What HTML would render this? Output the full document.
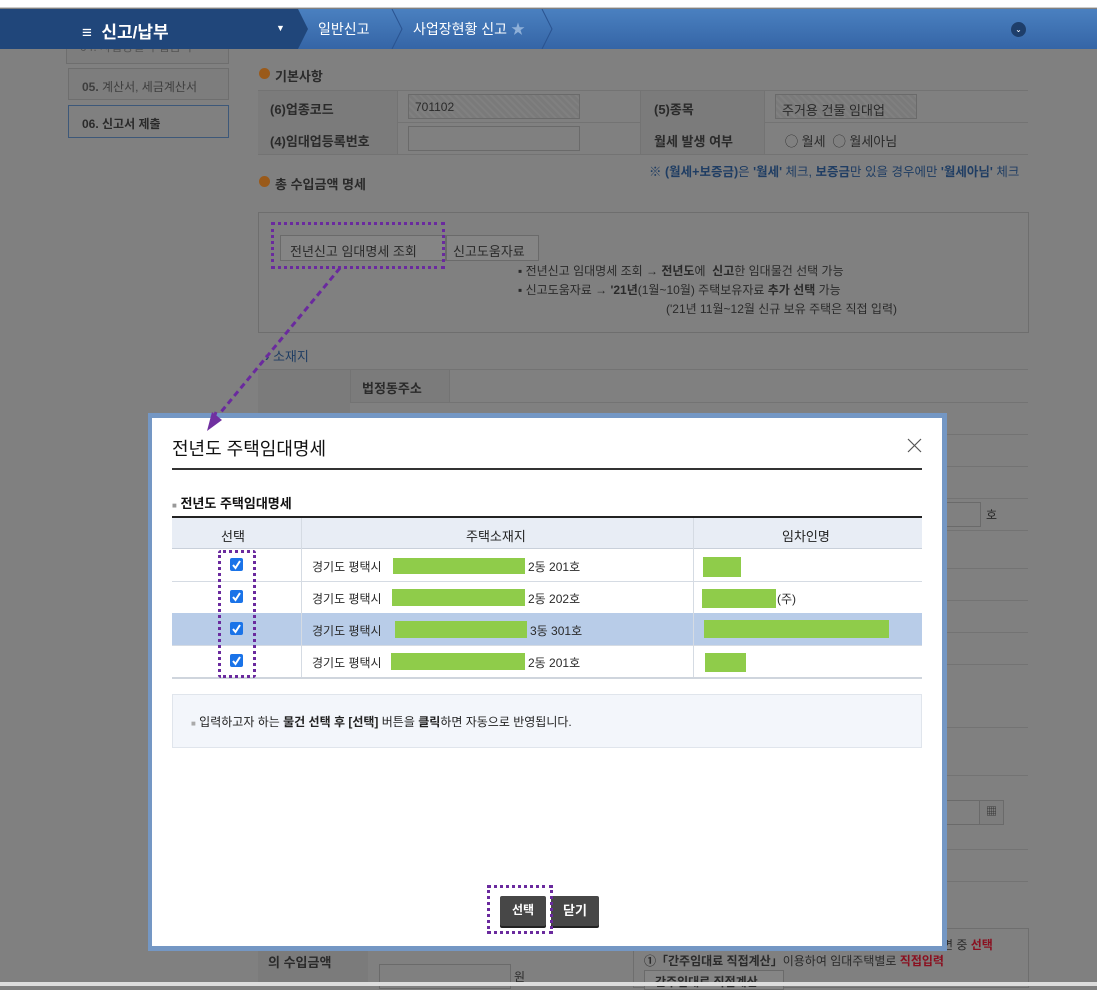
<!DOCTYPE html>
<html><head><meta charset="utf-8"><style>
*{margin:0;padding:0;box-sizing:border-box}
body{width:1097px;height:986px;overflow:hidden;background:#808080;position:relative;font-family:"Liberation Sans","Noto Sans CJK KR",sans-serif;font-size:12px;color:#2a2a2a}
.a{position:absolute}
.b{font-weight:bold}
.ln{position:absolute;height:1px;background:#737373}
</style></head><body>
<div class="a" style="left:0;top:0;width:1097px;height:8px;background:#fff;border-bottom:1px solid #ccc"></div>
<div class="a" style="left:66px;top:40px;width:163px;height:24px;border:1px solid #6e6e6e;background:#7d7d7d;padding:0 13px;color:#555;font-size:12px;line-height:12px">04. 사업장별 수입금액</div>
<div class="a" style="left:0;top:9px;width:1097px;height:40px;background:linear-gradient(#4a80c0,#3565a6)"></div>
<div class="a" style="left:0;top:9px;width:297px;height:40px;background:#20467a"></div>
<div class="a b" style="left:82px;top:18px;color:#fff;font-size:17px">≡&nbsp; 신고/납부</div>
<div class="a" style="left:276px;top:23px;color:#fff;font-size:9px">▼</div>
<svg class="a" style="left:290px;top:9px" width="20" height="40"><path d="M0 0H8L18 20L8 40H0Z" fill="#20467a"/></svg>
<div class="a" style="left:318px;top:19px;color:#fff;font-size:14px">일반신고</div>
<svg class="a" style="left:390px;top:9px" width="14" height="40"><path d="M2 0L12 20L2 40" fill="none" stroke="#2a5390" stroke-width="1"/></svg>
<div class="a" style="left:413px;top:19px;color:#fff;font-size:14px">사업장현황 신고 <span style="color:#8fb0d8">★</span></div>
<svg class="a" style="left:540px;top:9px" width="14" height="40"><path d="M2 0L12 20L2 40" fill="none" stroke="#2a5390" stroke-width="1"/></svg>
<div class="a" style="left:1011px;top:22px;width:15px;height:15px;border-radius:50%;background:#1e3e6a;color:#fff;font-size:8px;text-align:center;line-height:15px">⌄</div>

<div class="a" style="left:68px;top:68px;width:161px;height:32px;border:1px solid #6e6e6e;background:#7d7d7d;padding:9px 13px;color:#3e3e3e"><span class="b">05.</span> 계산서, 세금계산서</div>
<div class="a b" style="left:68px;top:105px;width:161px;height:33px;border:1px solid #3d5879;background:#808080;padding:9px 13px;color:#2a2a2a">06. 신고서 제출</div>

<div class="a" style="left:259px;top:68px;width:11px;height:11px;border-radius:50%;background:#9a5a1a"></div>
<div class="a b" style="left:275px;top:66px;font-size:13px">기본사항</div>
<div class="ln" style="left:258px;top:90px;width:770px"></div>
<div class="ln" style="left:258px;top:122px;width:770px"></div>
<div class="ln" style="left:258px;top:154px;width:770px"></div>
<div class="a" style="left:258px;top:91px;width:140px;height:63px;background:#7b7b7b;border-right:1px solid #737373"></div>
<div class="a" style="left:640px;top:91px;width:125px;height:63px;background:#7b7b7b;border-left:1px solid #737373;border-right:1px solid #737373"></div>
<div class="a b" style="left:270px;top:99px;font-size:13px">(6)업종코드</div>
<div class="a b" style="left:270px;top:131px;font-size:13px">(4)임대업등록번호</div>
<div class="a" style="left:408px;top:94px;width:172px;height:25px;border:1px solid #6a6a6a;background:repeating-linear-gradient(45deg,#7a7a7a 0 3px,#808080 3px 5px);padding:5px 6px">701102</div>
<div class="a" style="left:408px;top:126px;width:172px;height:25px;border:1px solid #6a6a6a"></div>
<div class="a b" style="left:654px;top:99px;font-size:13px">(5)종목</div>
<div class="a b" style="left:654px;top:131px;font-size:13px">월세 발생 여부</div>
<div class="a" style="left:775px;top:94px;width:142px;height:25px;border:1px solid #6a6a6a;background:repeating-linear-gradient(45deg,#7a7a7a 0 3px,#808080 3px 5px);padding:5px 6px;font-size:13px">주거용 건물 임대업</div>
<div class="a" style="left:785px;top:131px;font-size:13px">◯ 월세 &nbsp;◯ 월세아님</div>
<div class="a" style="left:649px;top:161px;color:#1f3d63;font-size:12.5px;white-space:nowrap">※ <b>(월세+보증금)</b>은 <b>'월세'</b> 체크, <b>보증금</b>만 있을 경우에만 <b>'월세아님'</b> 체크</div>
<div class="a" style="left:259px;top:176px;width:11px;height:11px;border-radius:50%;background:#9a5a1a"></div>
<div class="a b" style="left:275px;top:174px;font-size:13px">총 수입금액 명세</div>
<div class="a" style="left:258px;top:212px;width:771px;height:121px;border:1px solid #6e6e6e"></div>
<div class="a" style="left:280px;top:235px;width:166px;height:26px;border:1px solid #6a6a6a;background:#858585;padding:5px 9px;font-size:13px">전년신고 임대명세 조회</div>
<div class="a" style="left:446px;top:235px;width:93px;height:26px;border:1px solid #6a6a6a;background:#858585;padding:5px 6px;font-size:13px">신고도움자료</div>
<div class="a" style="left:271px;top:222px;width:174px;height:47px;border:3px dotted #6a2a9e"></div>
<div class="a" style="left:518px;top:262px;font-size:12px;line-height:19px">▪ 전년신고 임대명세 조회 → <b>전년도</b>에 &nbsp;<b>신고</b>한 임대물건 선택 가능<br>▪ 신고도움자료 → <b>'21년</b>(1월~10월) 주택보유자료 <b>추가 선택</b> 가능<br><span style="padding-left:148px">('21년 11월~12월 신규 보유 주택은 직접 입력)</span></div>
<div class="a" style="left:265px;top:346px;color:#1f3d63;font-size:13px"><b>›</b> 소재지</div>
<div class="ln" style="left:258px;top:369px;width:770px"></div>
<div class="ln" style="left:350px;top:402px;width:678px"></div>
<div class="a" style="left:258px;top:370px;width:92px;height:60px;background:#7b7b7b"></div>
<div class="a" style="left:350px;top:370px;width:100px;height:32px;background:#7b7b7b;border-left:1px solid #737373;border-right:1px solid #737373"></div>
<div class="a b" style="left:362px;top:378px;font-size:13px">법정동주소</div>
<div class="ln" style="left:942px;top:434px;width:86px"></div>
<div class="ln" style="left:942px;top:466px;width:86px"></div>
<div class="ln" style="left:942px;top:498px;width:86px"></div>
<div class="ln" style="left:942px;top:530px;width:86px"></div>
<div class="a" style="left:942px;top:502px;width:39px;height:25px;border:1px solid #6a6a6a;border-left:none"></div>
<div class="a" style="left:986px;top:506px;font-size:12px">호</div>
<div class="ln" style="left:942px;top:568px;width:86px"></div>
<div class="ln" style="left:942px;top:600px;width:86px"></div>
<div class="ln" style="left:942px;top:632px;width:86px"></div>
<div class="ln" style="left:942px;top:664px;width:86px"></div>
<div class="ln" style="left:942px;top:727px;width:86px"></div>
<div class="ln" style="left:942px;top:775px;width:86px"></div>
<div class="a" style="left:942px;top:800px;width:62px;height:25px;border:1px solid #6a6a6a;border-left:none"></div>
<div class="a" style="left:979px;top:800px;width:25px;height:25px;border:1px solid #6a6a6a;background:#7d7d7d;font-size:11px;text-align:center;line-height:23px">▦</div>
<div class="ln" style="left:942px;top:849px;width:86px"></div>
<div class="ln" style="left:942px;top:881px;width:86px"></div>

<div class="a" style="left:258px;top:928px;width:110px;height:58px;background:#7b7b7b"></div>
<div class="a" style="left:268px;top:933px;font-size:13px;line-height:20px"><b>(20)보증금 등<br>의 수입금액</b></div>
<div class="a" style="left:379px;top:964px;width:132px;height:25px;border:1px solid #6a6a6a"></div>
<div class="a" style="left:514px;top:968px">원</div>
<div class="a" style="left:633px;top:928px;width:396px;height:60px;border:1px solid #6e6e6e"></div>
<div class="a" style="left:942px;top:936px;font-size:12px">면 중 <b style="color:#8a1020">선택</b></div>
<div class="a" style="left:644px;top:952px;font-size:12px"><b>①「간주임대료 직접계산」</b>이용하여 임대주택별로 <b style="color:#8a1020">직접입력</b></div>
<div class="a" style="left:644px;top:970px;width:140px;height:20px;border:1px solid #6a6a6a;background:#858585;padding:2px 10px;font-weight:bold">간주임대료 직접계산</div>
<div class="a" style="left:0;top:982px;width:1097px;height:4px;background:#ddd"></div>

<svg class="a" style="left:0;top:0" width="1097" height="986"><path d="M340 268L216 418" stroke="#6a2a9e" stroke-width="3" stroke-dasharray="6,4" fill="none"/></svg>

<div class="a" style="left:148px;top:413px;width:799px;height:538px;background:#7497c4"></div>
<div class="a" style="left:152px;top:418px;width:790px;height:528px;background:#fff"></div>
<svg class="a" style="left:0;top:0" width="400" height="450"><path d="M207 431L212 412L222 420Z" fill="#7030a0"/><path d="M214 418L216 412" stroke="#7030a0" stroke-width="3"/></svg>
<div class="a" style="left:172px;top:435px;font-size:18px;color:#111">전년도 주택임대명세</div>
<svg class="a" style="left:907px;top:438px" width="15" height="15"><path d="M1 1L14 14M14 1L1 14" stroke="#555" stroke-width="1.2"/></svg>
<div class="a" style="left:172px;top:468px;width:750px;height:2px;background:#333"></div>
<div class="a" style="left:172px;top:493px;font-size:13px;font-weight:bold;color:#111"><span style="color:#999;font-size:8px">■</span> 전년도 주택임대명세</div>
<div class="a" style="left:172px;top:516px;width:750px;height:2px;background:#222"></div>
<div class="a" style="left:172px;top:518px;width:750px;height:31px;background:#e8edf5;border-bottom:1px solid #c9d0da"></div>
<div class="a" style="left:301px;top:518px;width:1px;height:160px;background:#d5dbe3"></div>
<div class="a" style="left:693px;top:518px;width:1px;height:160px;background:#d5dbe3"></div>
<div class="a" style="left:221px;top:526px;font-size:13px;color:#222">선택</div>
<div class="a" style="left:466px;top:526px;font-size:13px;color:#222">주택소재지</div>
<div class="a" style="left:782px;top:526px;font-size:13px;color:#222">임차인명</div>
<div class="a" style="left:172px;top:581px;width:750px;height:1px;background:#d5dbe3"></div>
<div class="a" style="left:172px;top:613px;width:750px;height:33px;background:#b8cce8"></div>
<div class="a" style="left:172px;top:645px;width:750px;height:1px;background:#d5dbe3"></div>
<div class="a" style="left:172px;top:677px;width:750px;height:2px;background:#cfd5dd"></div>
<div class="a" style="left:301px;top:613px;width:1px;height:33px;background:#d5dbe3"></div>
<div class="a" style="left:693px;top:613px;width:1px;height:33px;background:#d5dbe3"></div>
<svg class="a" style="left:230px;top:558px" width="14" height="114"><g fill="#1a73e8"><rect x="0" y="0" width="13" height="13" rx="2"/><rect x="0" y="32" width="13" height="13" rx="2"/><rect x="0" y="64" width="13" height="13" rx="2"/><rect x="0" y="96" width="13" height="13" rx="2"/></g><g stroke="#fff" stroke-width="2" fill="none"><path d="M3 7L5.5 10L10 3"/><path d="M3 39L5.5 42L10 35"/><path d="M3 71L5.5 74L10 67"/><path d="M3 103L5.5 106L10 99"/></g></svg>
<div class="a" style="left:218px;top:550px;width:38px;height:128px;border:3px dotted #6a2a9e;border-radius:3px"></div>
<div class="a" style="left:312px;top:558px;font-size:12px">경기도 평택시 </div><div class="a" style="left:393px;top:558px;width:132px;height:16px;background:#8fcc4a"></div><div class="a" style="left:528px;top:558px">2동 201호</div>
<div class="a" style="left:312px;top:590px">경기도 평택시</div><div class="a" style="left:392px;top:589px;width:133px;height:17px;background:#8fcc4a"></div><div class="a" style="left:528px;top:590px">2동 202호</div>
<div class="a" style="left:312px;top:622px">경기도 평택시</div><div class="a" style="left:395px;top:621px;width:132px;height:17px;background:#8fcc4a"></div><div class="a" style="left:530px;top:622px">3동 301호</div>
<div class="a" style="left:312px;top:654px">경기도 평택시</div><div class="a" style="left:391px;top:653px;width:134px;height:17px;background:#8fcc4a"></div><div class="a" style="left:528px;top:654px">2동 201호</div>
<div class="a" style="left:703px;top:557px;width:38px;height:20px;background:#8fcc4a"></div>
<div class="a" style="left:702px;top:589px;width:74px;height:19px;background:#8fcc4a"></div><div class="a" style="left:777px;top:590px">(주)</div>
<div class="a" style="left:704px;top:620px;width:185px;height:18px;background:#8fcc4a"></div>
<div class="a" style="left:705px;top:653px;width:41px;height:19px;background:#8fcc4a"></div>
<div class="a" style="left:172px;top:694px;width:750px;height:54px;background:#f3f6fb;border:1px solid #e0e5ec;padding:18px 18px;font-size:12px;color:#222"><span style="color:#aaa;font-size:8px">■</span> 입력하고자 하는 <b>물건 선택 후 [선택]</b> 버튼을 <b>클릭</b>하면 자동으로 반영됩니다.</div>
<div class="a" style="left:500px;top:896px;width:46px;height:30px;background:#474747;border-radius:2px;box-shadow:0 2px 0 #222;color:#fff;font-weight:bold;text-align:center;line-height:29px;font-size:12px">선택</div>
<div class="a" style="left:551px;top:896px;width:48px;height:30px;background:#474747;border-radius:2px;box-shadow:0 2px 0 #222;color:#fff;font-weight:bold;text-align:center;line-height:29px;font-size:13px">닫기</div>
<div class="a" style="left:487px;top:885px;width:66px;height:49px;border:3px dotted #6a2a9e"></div>
</body></html>
